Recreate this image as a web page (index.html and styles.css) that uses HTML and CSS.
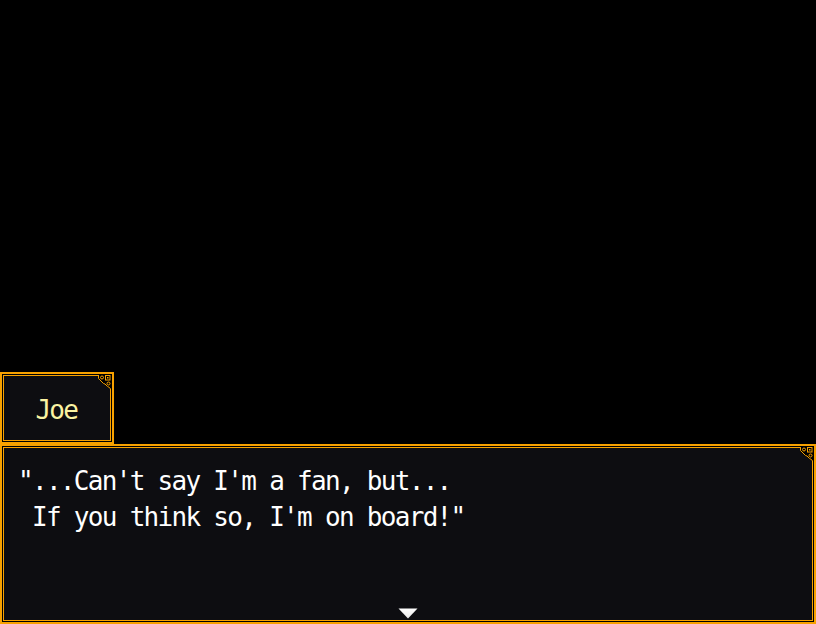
FILE: index.html
```html
<!DOCTYPE html>
<html>
<head>
<meta charset="utf-8">
<link rel="stylesheet" href="styles.css">
</head>
<body>
<div class="screen">
  <div class="win name-win">
    <div class="pane name-pane">
      <svg class="corner" width="16" height="16" viewBox="0 0 16 16">
        <path d="M3 0 L16 0 L16 14 L15.5 14 L14 12.5 L12 11.5 L10 9.5 L8.5 9 L6 6.5 L5 6 L3.5 4 Z" fill="#000"/>
        <path d="M3.5 0 L3.5 3.5 L6 6 L8.5 8.5 L10 9 L12.5 11.5 L14.5 12.5 L15.5 14 L15.5 16" fill="none" stroke="#f7a100" stroke-width="1"/>
        <circle cx="7" cy="2.5" r="1.5" fill="none" stroke="#f7a100" stroke-width="1"/>
        <rect x="10.5" y="0.5" width="4.5" height="4.5" fill="none" stroke="#f7a100" stroke-width="1"/>
        <rect x="12" y="2" width="1.5" height="1.5" fill="#f7a100"/>
        <circle cx="13.5" cy="8.5" r="1.5" fill="none" stroke="#f7a100" stroke-width="1"/>
      </svg>
      <span class="name">Joe</span>
    </div>
  </div>
  <div class="win msg-win">
    <div class="pane msg-pane">
      <svg class="corner" width="16" height="16" viewBox="0 0 16 16">
        <path d="M3 0 L16 0 L16 14 L15.5 14 L14 12.5 L12 11.5 L10 9.5 L8.5 9 L6 6.5 L5 6 L3.5 4 Z" fill="#000"/>
        <path d="M3.5 0 L3.5 3.5 L6 6 L8.5 8.5 L10 9 L12.5 11.5 L14.5 12.5 L15.5 14 L15.5 16" fill="none" stroke="#f7a100" stroke-width="1"/>
        <circle cx="7" cy="2.5" r="1.5" fill="none" stroke="#f7a100" stroke-width="1"/>
        <rect x="10.5" y="0.5" width="4.5" height="4.5" fill="none" stroke="#f7a100" stroke-width="1"/>
        <rect x="12" y="2" width="1.5" height="1.5" fill="#f7a100"/>
        <circle cx="13.5" cy="8.5" r="1.5" fill="none" stroke="#f7a100" stroke-width="1"/>
      </svg>
      <div class="msg">
        <div class="line">"...Can't say I'm a fan, but...</div>
        <div class="line"> If you think so, I'm on board!"</div>
      </div>
      <svg class="pause" width="20" height="11" viewBox="0 0 20 11">
        <defs>
          <linearGradient id="pg" x1="0" y1="0" x2="0" y2="1">
            <stop offset="0" stop-color="#ffffff"/>
            <stop offset="1" stop-color="#e8e8e8"/>
          </linearGradient>
        </defs>
        <path d="M0.5 0.5 L19.5 0.5 L10 10.5 Z" fill="url(#pg)"/>
      </svg>
    </div>
  </div>
</div>
</body>
</html>
```
FILE: styles.css
```css
html, body {
  margin: 0;
  padding: 0;
  background: #000;
}

.screen {
  width: 816px;
  height: 624px;
  display: flex;
  flex-direction: column;
  justify-content: flex-end;
  align-items: flex-start;
  font-family: "DejaVu Sans Mono", "Liberation Mono", monospace;
}

.win {
  box-sizing: border-box;
  border: 2px solid #f7a100;
  padding: 1px;
  background: #000;
  display: flex;
}

.pane {
  position: relative;
  flex: 1;
  border: 1px solid #f7a100;
  background: #0d0d11;
  display: flex;
}

.corner {
  position: absolute;
  top: -1px;
  right: -1px;
}

.name-win {
  width: 114px;
  height: 72px;
}

.name-pane {
  align-items: center;
  justify-content: center;
  padding: 4px 3px 0 0;
}

.name {
  color: #fbf3a2;
  font-size: 26px;
  letter-spacing: -1.7px;
  margin-right: -1.7px;
  line-height: 30px;
}

.msg-win {
  width: 816px;
  height: 180px;
}

.msg-pane {
  flex-direction: column;
  padding: 15px 14px 1px 14px;
}

.msg {
  color: #ffffff;
  font-size: 26px;
  letter-spacing: -1.7px;
  line-height: 36px;
}

.line {
  white-space: pre;
}

.pause {
  margin-top: auto;
  align-self: center;
  display: block;
}
```
